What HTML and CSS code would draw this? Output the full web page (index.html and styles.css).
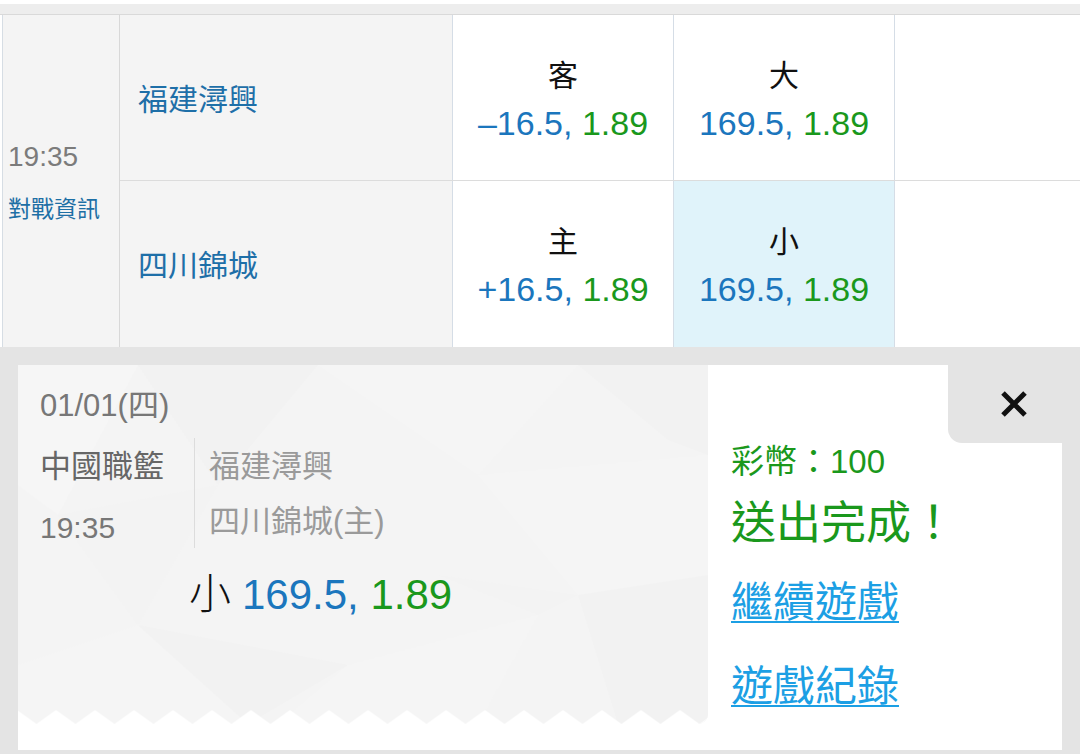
FILE: index.html
```html
<!DOCTYPE html>
<html lang="zh-Hant">
<head>
<meta charset="utf-8">
<title>投注</title>
<link rel="stylesheet" href="styles.css">
</head>
<body>
<div class="page">
  <div class="topbar"></div>
  <div class="match">
    <div class="timecol">
      <div class="time">19:35</div>
      <div class="info">對戰資訊</div>
    </div>
    <div class="rows">
      <div class="row row-first">
        <div class="team">福建潯興</div>
        <div class="odd">
          <div class="lbl">客</div>
          <div class="val"><span class="b">–16.5,</span> <span class="g">1.89</span></div>
        </div>
        <div class="odd">
          <div class="lbl">大</div>
          <div class="val"><span class="b">169.5,</span> <span class="g">1.89</span></div>
        </div>
        <div class="blank"></div>
      </div>
      <div class="row">
        <div class="team">四川錦城</div>
        <div class="odd">
          <div class="lbl">主</div>
          <div class="val"><span class="b">+16.5,</span> <span class="g">1.89</span></div>
        </div>
        <div class="odd odd-sel">
          <div class="lbl">小</div>
          <div class="val"><span class="b">169.5,</span> <span class="g">1.89</span></div>
        </div>
        <div class="blank"></div>
      </div>
    </div>
  </div>

  <div class="overlay">
    <div class="card">
      <div class="ticket">
        <div class="ticket-face">
          <svg class="bgpoly" viewBox="0 0 690 359" preserveAspectRatio="none">
            <polygon points="0,0 120,0 40,150 0,120" fill="#f6f6f6"/>
            <polygon points="120,0 300,0 200,120" fill="#f2f2f2"/>
            <polygon points="300,0 560,0 460,110" fill="#f5f5f5"/>
            <polygon points="560,0 690,0 690,90 650,75" fill="#f2f2f2"/>
            <polygon points="40,150 200,120 120,260" fill="#f3f3f3"/>
            <polygon points="460,110 690,90 690,210 560,230" fill="#f5f5f5"/>
            <polygon points="0,300 120,260 230,359 0,359" fill="#f5f5f5"/>
            <polygon points="120,260 330,300 230,359" fill="#f2f2f2"/>
            <polygon points="330,300 520,250 460,359 260,359" fill="#f5f5f5"/>
            <polygon points="560,230 690,210 690,359 600,359" fill="#f2f2f2"/>
            <polygon points="420,210 560,230 520,250" fill="#f3f3f3"/>
          </svg>
          <div class="date">01/01(四)</div>
          <div class="meta">
            <div class="meta-left">
              <div class="league">中國職籃</div>
              <div class="mtime">19:35</div>
            </div>
            <div class="meta-teams">
              <div class="mteam">福建潯興</div>
              <div class="mteam mteam-2">四川錦城(主)</div>
            </div>
          </div>
          <div class="pick"><span class="pick-lbl">小</span><span class="b">169.5,</span> <span class="g">1.89</span></div>
          <svg class="zigzag" width="690" height="14" viewBox="0 0 690 14">
            <defs>
              <pattern id="zz" width="39" height="14" patternUnits="userSpaceOnUse" x="18.5" y="0">
                <polygon points="0,14 19.5,0 39,14" fill="#ffffff"/>
              </pattern>
            </defs>
            <rect x="0" y="0" width="690" height="14" fill="url(#zz)"/>
          </svg>
        </div>
      </div>
      <div class="result">
        <div class="coins">彩幣：100</div>
        <div class="done">送出完成！</div>
        <a class="link" href="#">繼續遊戲</a>
        <a class="link link-2" href="#">遊戲紀錄</a>
      </div>
      <div class="close">
        <svg width="30" height="30" viewBox="0 0 30 30">
          <path d="M4 4 L26 26 M26 4 L4 26" stroke="#111" stroke-width="5" stroke-linecap="butt" fill="none"/>
        </svg>
      </div>
    </div>
  </div>
</div>
</body>
</html>
```

FILE: styles.css
```css
* { box-sizing: border-box; }
html, body {
  margin: 0;
  padding: 0;
  background: #ffffff;
}
body {
  width: 1080px;
  height: 754px;
  overflow: hidden;
  font-family: "Liberation Sans", "Noto Sans CJK TC", sans-serif;
}
.page {
  display: flex;
  flex-direction: column;
  height: 754px;
}
.topbar {
  height: 11px;
  margin-top: 4px;
  background: #ededed;
  border-bottom: 1px solid #d9d9d9;
}
.match {
  display: flex;
  height: 332px;
  margin-left: 2px;
  border-left: 1px solid #d6dde4;
}
.timecol {
  width: 117px;
  background: #f4f4f4;
  border-right: 1px solid #d8d8d8;
  display: flex;
  flex-direction: column;
  justify-content: center;
  padding-left: 5px;
  padding-top: 2px;
}
.time {
  font-size: 28px;
  line-height: 32px;
  color: #7b7b7b;
}
.info {
  margin-top: 21px;
  font-size: 23px;
  line-height: 30px;
  color: #1d6fa5;
}
.rows {
  flex: 1;
  display: flex;
  flex-direction: column;
}
.row {
  display: flex;
  height: 166px;
}
.row-first {
  border-bottom: 1px solid #dcdcdc;
}
.team {
  width: 333px;
  background: #f4f4f4;
  border-right: 1px solid #d5dde6;
  padding-left: 18px;
  display: flex;
  align-items: center;
  font-size: 30px;
  color: #1e6fa8;
  padding-bottom: 2px;
}
.odd {
  width: 221px;
  background: #ffffff;
  border-right: 1px solid #d5dde6;
  display: flex;
  flex-direction: column;
  align-items: center;
  justify-content: center;
  padding-top: 2px;
}
.odd-sel {
  background: #e0f3fa;
}
.lbl {
  font-size: 30px;
  line-height: 36px;
  color: #111;
  font-family: "Noto Sans CJK TC", sans-serif;
}
.val {
  margin-top: 12px;
  font-size: 34px;
  line-height: 40px;
  white-space: nowrap;
}
.b { color: #1b76bd; }
.g { color: #1a981c; }
.blank {
  flex: 1;
  background: #ffffff;
}

.overlay {
  flex: 1;
  background: #e4e4e4;
  padding: 18px 18px 4px 18px;
}
.card {
  position: relative;
  display: flex;
  height: 385px;
  background: #ffffff;
}
.ticket {
  width: 690px;
  background: #ffffff;
}
.ticket-face {
  position: relative;
  height: 359px;
  background: #f4f4f4;
  overflow: hidden;
  border-bottom-right-radius: 10px;
  padding-left: 22px;
  padding-top: 21px;
}
.bgpoly {
  position: absolute;
  left: 0;
  top: 0;
  width: 690px;
  height: 359px;
}
.zigzag {
  position: absolute;
  left: 0;
  bottom: 0;
}
.date, .meta, .pick {
  position: relative;
}
.date {
  font-size: 31px;
  line-height: 40px;
  color: #777;
}
.meta {
  display: flex;
  margin-top: 12px;
  height: 110px;
}
.meta-left {
  width: 155px;
  border-right: 1px solid #dcdcdc;
  padding-top: 9px;
}
.league {
  font-size: 31px;
  line-height: 40px;
  color: #666;
}
.mtime {
  margin-top: 21px;
  font-size: 30px;
  line-height: 40px;
  color: #777;
}
.meta-teams {
  padding-left: 14px;
  padding-top: 9px;
}
.mteam {
  font-size: 31px;
  line-height: 40px;
  color: #9a9a9a;
}
.mteam-2 {
  margin-top: 15px;
}
.pick {
  margin-top: 18px;
  margin-left: 149px;
  font-size: 42px;
  line-height: 50px;
  color: #111;
  white-space: nowrap;
}
.pick-lbl {
  margin-right: 11px;
  font-family: "Noto Sans CJK TC", sans-serif;
  font-weight: 300;
}

.result {
  flex: 1;
  background: #ffffff;
  padding-left: 23px;
  padding-top: 75px;
  display: flex;
  flex-direction: column;
  align-items: flex-start;
}
.coins {
  font-size: 33px;
  line-height: 44px;
  color: #1a981c;
}
.done {
  margin-top: 14px;
  font-size: 45px;
  line-height: 52px;
  color: #1a981c;
}
.link {
  margin-top: 27px;
  font-size: 42px;
  line-height: 52px;
  color: #1c9fe4;
  text-decoration: underline;
  text-decoration-thickness: 2px;
  text-underline-offset: 4px;
}
.link-2 {
  margin-top: 32px;
}
.close {
  position: absolute;
  top: 0;
  right: 0;
  width: 114px;
  height: 78px;
  background: #e4e4e4;
  border-bottom-left-radius: 14px;
  display: flex;
  align-items: center;
  justify-content: center;
  padding-left: 17px;
}
```
